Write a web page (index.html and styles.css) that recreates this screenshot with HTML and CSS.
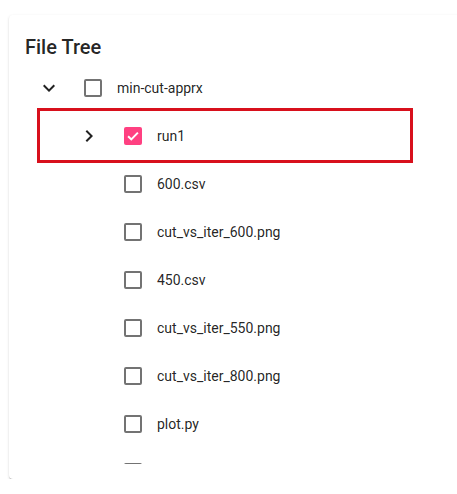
FILE: index.html
```html
<!DOCTYPE html>
<html>
<head>
<meta charset="utf-8">
<link rel="stylesheet" href="styles.css">
</head>
<body>
<div class="card">
  <div class="title">File Tree</div>
  <div class="tree">
    <div class="row">
      <span class="toggle"><svg viewBox="0 0 24 24" width="24" height="24"><path d="M16.59 8.59L12 13.17 7.41 8.59 6 10l6 6 6-6z"/></svg></span>
      <span class="box"></span>
      <span class="label">min-cut-apprx</span>
    </div>
    <div class="row lvl1 selected">
      <span class="toggle"><svg viewBox="0 0 24 24" width="24" height="24"><path d="M10 6L8.59 7.41 13.17 12l-4.58 4.59L10 18l6-6z"/></svg></span>
      <span class="box checked"><svg viewBox="0 0 18 18" width="18" height="18"><path d="M4.1 9.2l3.2 3.2 6.6-6.8" fill="none" stroke="#fff" stroke-width="2"/></svg></span>
      <span class="label">run1</span>
      <span class="highlight"></span>
    </div>
    <div class="row lvl1"><span class="toggle"></span><span class="box"></span><span class="label">600.csv</span></div>
    <div class="row lvl1"><span class="toggle"></span><span class="box"></span><span class="label">cut_vs_iter_600.png</span></div>
    <div class="row lvl1"><span class="toggle"></span><span class="box"></span><span class="label">450.csv</span></div>
    <div class="row lvl1"><span class="toggle"></span><span class="box"></span><span class="label">cut_vs_iter_550.png</span></div>
    <div class="row lvl1"><span class="toggle"></span><span class="box"></span><span class="label">cut_vs_iter_800.png</span></div>
    <div class="row lvl1"><span class="toggle"></span><span class="box"></span><span class="label">plot.py</span></div>
    <div class="row lvl1"><span class="toggle"></span><span class="box"></span></div>
  </div>
</div>
</body>
</html>
```
FILE: styles.css
```css
html, body {
  margin: 0;
  padding: 0;
  overflow: hidden;
  background: #fff;
}
body {
  padding: 15px 0 0 9px;
  font-family: Roboto, "Liberation Sans", sans-serif;
  color: rgba(0, 0, 0, 0.87);
}
.card {
  width: 480px;
  box-sizing: border-box;
  padding: 16px 16px 15px 16px;
  border-radius: 4px;
  background: #fff;
  box-shadow: 0 2px 1px -1px rgba(0,0,0,.2), 0 1px 1px 0 rgba(0,0,0,.14), 0 1px 3px 0 rgba(0,0,0,.12);
}
.title {
  font-size: 20px;
  font-weight: 500;
  line-height: 32px;
  height: 33px;
}
.tree {
  height: 400px;
  overflow: hidden;
}
.row {
  position: relative;
  display: flex;
  align-items: center;
  height: 48px;
  font-size: 14px;
}
.lvl1 {
  padding-left: 40px;
}
.toggle {
  width: 48px;
  height: 24px;
  display: flex;
  justify-content: center;
  flex: none;
}
.toggle svg {
  fill: rgba(0, 0, 0, 0.87);
}
.box {
  width: 18px;
  height: 18px;
  box-sizing: border-box;
  border: 2px solid #737373;
  border-radius: 2px;
  margin-left: 11px;
  flex: none;
  position: relative;
}
.box.checked {
  border: none;
  background: #ff4081;
}
.box.checked svg {
  display: block;
}
.label {
  margin-left: 15px;
}
.highlight {
  position: absolute;
  left: 12px;
  top: -4px;
  width: 376px;
  height: 55px;
  box-sizing: border-box;
  border: 3px solid #d8101c;
}
```
